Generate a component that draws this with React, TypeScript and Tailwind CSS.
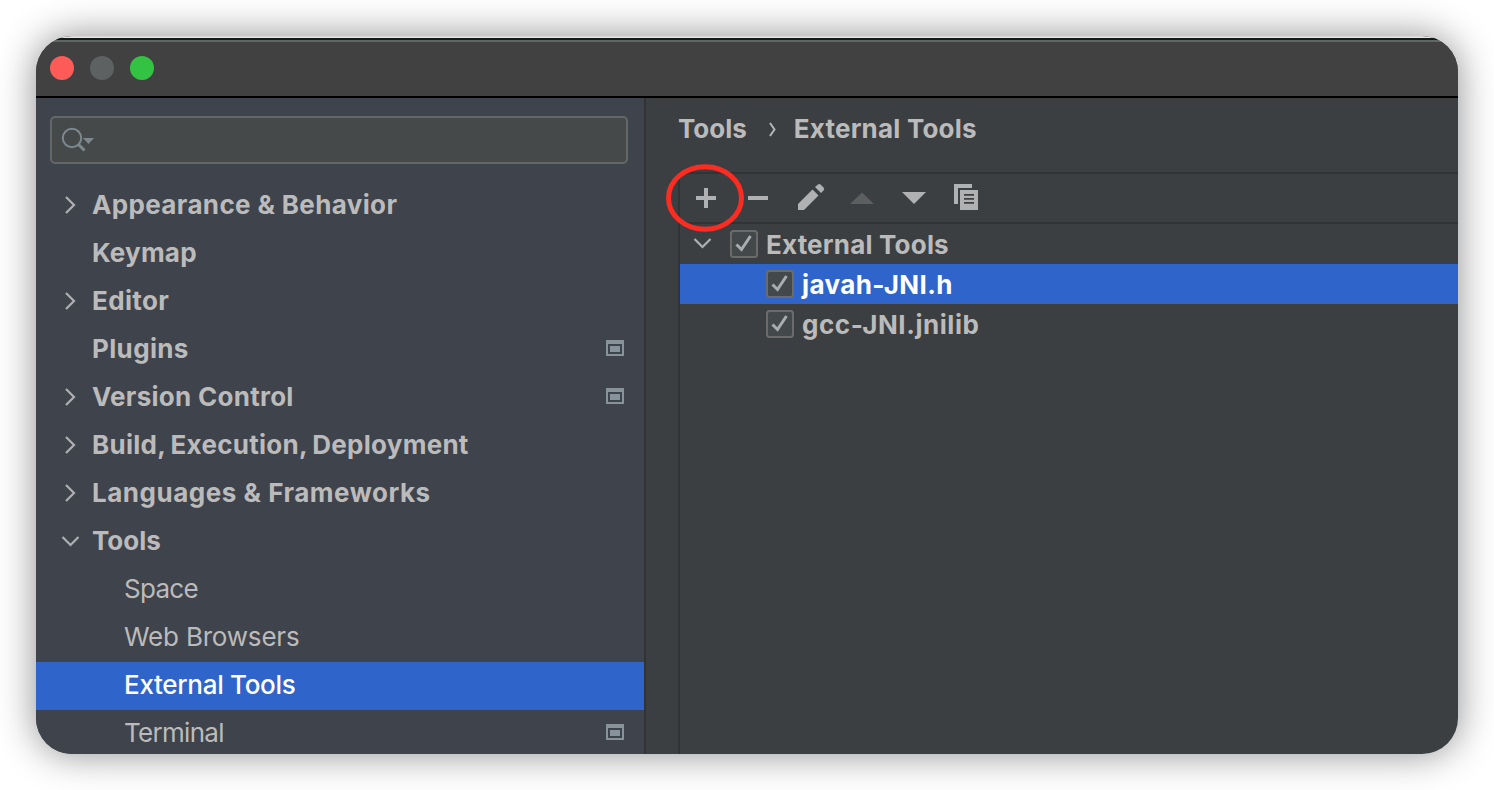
import React from "react";

type NavItem = {
  label: string;
  state?: "closed" | "open";
  child?: boolean;
  selected?: boolean;
  badge?: boolean;
  tracking: string;
};

const NAV: NavItem[] = [
  { label: "Appearance & Behavior", state: "closed", tracking: "tracking-[0.36px]" },
  { label: "Keymap", tracking: "tracking-[0.2px]" },
  { label: "Editor", state: "closed", tracking: "tracking-[0.35px]" },
  { label: "Plugins", badge: true, tracking: "tracking-[0.35px]" },
  { label: "Version Control", state: "closed", badge: true, tracking: "tracking-[0.27px]" },
  {
    label: "Build, Execution, Deployment",
    state: "closed",
    tracking: "tracking-[0.26px] [word-spacing:-1.2px]",
  },
  { label: "Languages & Frameworks", state: "closed", tracking: "tracking-[0.52px]" },
  { label: "Tools", state: "open", tracking: "tracking-[0px]" },
  { label: "Space", child: true, tracking: "tracking-[-0.7px]" },
  { label: "Web Browsers", child: true, tracking: "tracking-[-0.2px]" },
  { label: "External Tools", child: true, selected: true, tracking: "tracking-[-0.3px]" },
  { label: "Terminal", child: true, badge: true, tracking: "tracking-[-0.7px]" },
];

function Chevron({ open }: { open?: boolean }) {
  return (
    <svg className="h-6 w-6 shrink-0" viewBox="0 0 24 24" fill="none" stroke="#adb0b3" strokeWidth="2.2">
      <path d={open ? "M4.5 8L12.5 16L20.5 8" : "M8 4L16 12L8 20"} />
    </svg>
  );
}

function ProjectBadge() {
  return (
    <svg className="h-4 w-[18px] shrink-0" viewBox="0 0 18 16" shapeRendering="crispEdges" fill="#87939a">
      <path fillRule="evenodd" d="M0 0H18V16H0ZM2 4V14H16V4Z" />
      <rect x="4" y="6" width="10" height="6" />
    </svg>
  );
}

function NavRow({ item }: { item: NavItem }) {
  return (
    <div
      className={
        "flex h-12 shrink-0 items-center pr-5 pb-0.5 " +
        (item.child ? "pl-[88px] " : "pl-[22px] ") +
        (item.selected ? "bg-[#2f65ca] text-white" : "text-[#bbbbbb]")
      }
    >
      {!item.child && (
        <div className="mr-[10px] flex w-6">{item.state && <Chevron open={item.state === "open"} />}</div>
      )}
      <span
        className={
          "whitespace-pre text-[26px] leading-[46px] " +
          (item.child ? (item.selected ? "font-medium " : "font-normal ") : "font-bold ") +
          item.tracking
        }
      >
        {item.label}
      </span>
      {item.badge && (
        <div className="mb-0.5 ml-auto flex">
          <ProjectBadge />
        </div>
      )}
    </div>
  );
}

function Check() {
  return (
    <svg className="h-7 w-7 shrink-0" viewBox="0 0 28 28" fill="none">
      <rect x="1" y="1" width="26" height="26" rx="2.5" fill="#43494a" stroke="#6b6b6b" strokeWidth="2" />
      <path d="M6.5 14.5L11.500 19.500L20.500 6" stroke="#a9adaf" strokeWidth="3" />
    </svg>
  );
}

export default function App() {
  return (
    <div className="h-[790px] w-[1494px] overflow-hidden bg-white pt-9 pl-9 font-['Inter',sans-serif]">
      <div className="flex h-[718px] w-[1422px] flex-col overflow-hidden rounded-[36px] bg-[#3c3f41] shadow-[0_0_38px_rgba(0,0,0,0.45)]">
        <div className="h-px shrink-0 bg-[#d6d6d6]" />
        <div className="h-px shrink-0 bg-[#e6e6e6]" />
        <div className="h-0.5 shrink-0 bg-[#151a18]" />
        <div className="h-0.5 shrink-0 bg-[#606663]" />
        <div className="flex h-14 shrink-0 gap-4 border-b-2 border-black bg-[#414142] pt-[14px] pl-[14px]">
          <div className="h-6 w-6 rounded-full bg-[#fc5b57]" />
          <div className="h-6 w-6 rounded-full bg-[#5e6162]" />
          <div className="h-6 w-6 rounded-full bg-[#33c343]" />
        </div>

        <div className="flex min-h-0 flex-1">
          <aside className="flex w-[610px] shrink-0 flex-col overflow-hidden border-r-2 border-[#323334] bg-[#3f434c] pt-[18px]">
            <div className="mx-[14px] mb-[18px] flex h-12 w-[578px] shrink-0 items-center rounded-[5px] border-2 border-[#646767] bg-[#45494a] pl-[9px]">
              <svg className="h-7 w-9" viewBox="0 0 36 28" fill="none">
                <circle cx="11" cy="12" r="9.2" stroke="#7d888f" strokeWidth="2" />
                <path d="M17.5 18.5L23.5 24.5" stroke="#7d888f" strokeWidth="3" />
                <path d="M22 12H33L27.5 18Z" fill="#7d888f" />
              </svg>
            </div>
            {NAV.map((item) => (
              <NavRow key={item.label} item={item} />
            ))}
          </aside>

          <main className="flex min-w-0 flex-1 flex-col pl-8">
            <div className="flex h-[74px] shrink-0 text-[26px] leading-[62px] font-bold text-[#bbbbbb]">
              <span>Tools</span>
              <svg className="mt-[23px] ml-5 h-4 w-3" viewBox="0 0 12 16" fill="none">
                <path d="M3 2L7.500 8.500L3 15" stroke="#b4b6b8" strokeWidth="2" />
              </svg>
              <span className="ml-[15px] tracking-[0.2px]">External Tools</span>
            </div>
            <div className="relative flex min-h-0 flex-1 flex-col border-t-2 border-l-2 border-[#323334]">
              <div className="flex h-[50px] shrink-0 border-b-2 border-[#323334]">
                <svg className="h-12 w-[320px]" viewBox="680 174 320 48" fill="#afb1b3">
                  <path d="M704 188h4v8h8v4h-8v8h-4v-8h-8v-4h8z" />
                  <path d="M748 196h20v4h-20z" />
                  <path d="M798 204L812.500 189.500L818.500 195.500L804 210H798Z" />
                  <path d="M815 187L818 184.500Q819.500 183.500 821 185L823.500 187.500Q825 189 823.500 190.500L821 193Z" />
                  <path d="M850 204L862 192.500L874 204Z" fill="#5c5e5f" />
                  <path d="M902 192H926L914 204Z" />
                  <path d="M954 184H972V188H958V204H954Z" />
                  <path fillRule="evenodd" d="M960 190H978V210H960ZM964 194V195.700H974V194ZM964 198V199.700H974V198ZM964 202V203.700H974V202Z" />
                </svg>
              </div>
              <div className="flex h-10 shrink-0 items-center pl-[10px] text-[#bbbbbb]">
                <div className="flex pb-0.5">
                  <Chevron open />
                </div>
                <div className="mr-2 ml-4 flex">
                  <Check />
                </div>
                <span className="text-[26px] font-bold tracking-[0.2px]">External Tools</span>
              </div>
              <div className="flex h-10 shrink-0 items-center bg-[#2f65ca] pl-[86px] text-white">
                <Check />
                <span className="ml-2 text-[26px] font-bold tracking-[0.4px]">javah-JNI.h</span>
              </div>
              <div className="flex h-10 shrink-0 items-center pl-[86px] text-[#bbbbbb]">
                <Check />
                <span className="ml-2 text-[26px] font-bold tracking-[0.55px]">gcc-JNI.jnilib</span>
              </div>
              <svg className="absolute -top-[10px] -left-[14px] h-[70px] w-[80px]" viewBox="0 0 80 70" fill="none">
                <ellipse cx="39" cy="34" rx="36.500" ry="31.200" stroke="#fb2c21" strokeWidth="5" />
              </svg>
            </div>
          </main>
        </div>
      </div>
    </div>
  );
}
